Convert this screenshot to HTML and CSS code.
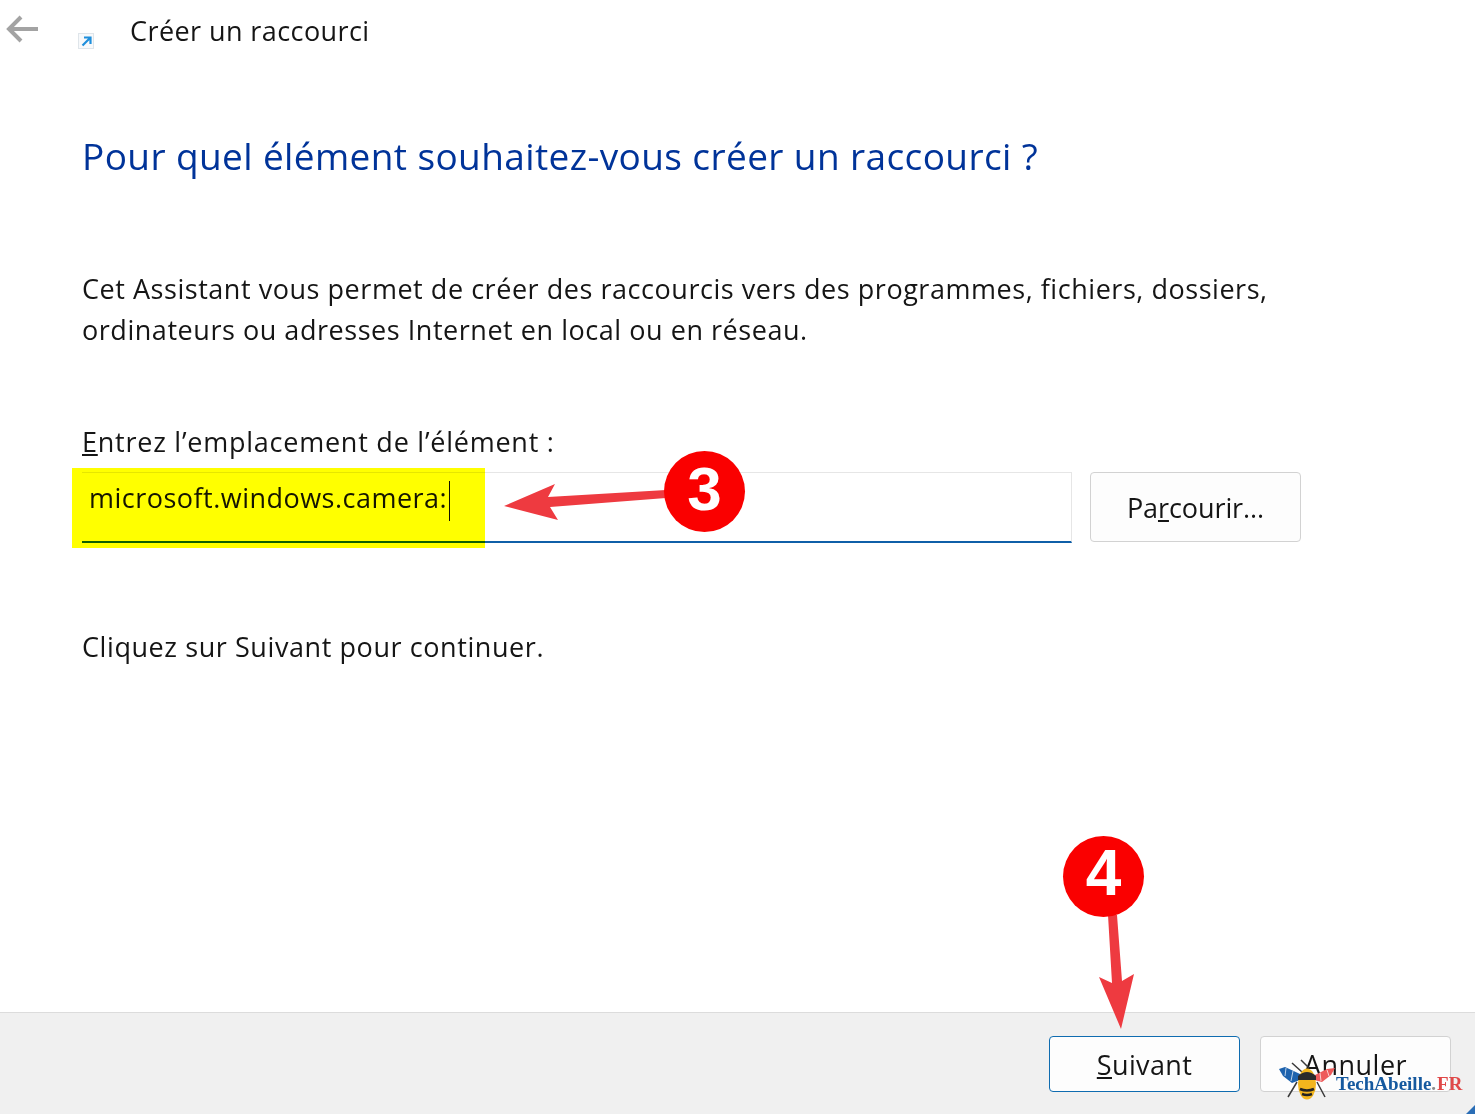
FILE: index.html
```html
<!DOCTYPE html>
<html lang="fr">
<head>
<meta charset="utf-8">
<title>Créer un raccourci</title>
<link rel="stylesheet" href="styles.css">
</head>
<body>
<div class="wizard">
  <header class="titlebar">
    <svg class="back" width="34" height="30" viewBox="0 0 34 30"><path d="M33 14H4M16 2L4 14l12 12" fill="none" stroke="#a3a3a3" stroke-width="4"/></svg>
    <svg class="shortcut" width="16" height="16" viewBox="0 0 16 16"><rect x=".5" y=".5" width="15" height="15" fill="#f7f9fb" stroke="#dfe5ea"/><path d="M4.500 12.500L12 5M6 4.500h6.500V11" fill="none" stroke="#1f8fdc" stroke-width="2.200"/></svg>
    <span class="wintitle">Créer un raccourci</span>
  </header>
  <main class="content">
    <h1 class="heading">Pour quel élément souhaitez-vous créer un raccourci ?</h1>
    <p class="intro">Cet Assistant vous permet de créer des raccourcis vers des programmes, fichiers, dossiers, ordinateurs ou adresses Internet en local ou en réseau.</p>
    <label class="label"><u>E</u>ntrez l’emplacement de l’élément :</label>
    <div class="field-row">
      <div class="input"><span class="value">microsoft.windows.camera:</span><span class="caret"></span><span class="hl"></span></div>
      <button class="btn browse">Pa<u>r</u>courir...</button>
    </div>
    <p class="hint">Cliquez sur Suivant pour continuer.</p>
  </main>
  <footer class="footer">
    <button class="btn next"><u>S</u>uivant</button>
    <button class="btn cancel">Annuler</button>
  </footer>

  <svg class="overlay" width="1475" height="1114" viewBox="0 0 1475 1114">
    <path d="M666 490L548 497L555 484L504 506L558 520L550 507L666 498Z" fill="#ee3a40"/>
    <path d="M1108 915L1117 915L1122 981L1134 974L1121 1029L1099 977L1112 983Z" fill="#ee3a40"/>
    <path d="M1292 1063l10 9M1301 1060l8 8M1297 1082l-9 15M1317 1082l8 15" stroke="#3a3a3a" stroke-width="1.500" fill="none"/>
    <path d="M1279 1069l6-2 15 7v6l-8 3-9-7z" fill="#1e63ae"/>
    <path d="M1335 1068l-8 1-12 6-1 5 8 2 9-7z" fill="#ee5a5a"/>
    <path d="M1286 1068l-1 8M1293 1071l-2 10M1327 1070l2 6M1320 1073l1 8" stroke="#fff" stroke-width=".7" fill="none"/>
    <ellipse cx="1307" cy="1084" rx="9" ry="15.500" fill="#f2b51d"/>
    <path d="M1298 1076q9-8 18 0v4h-18z" fill="#2b2b2b"/>
    <path d="M1300 1089q7 3 14 0M1302 1094q5 2 10 0" stroke="#222" stroke-width="2.500" fill="none"/>
    <path d="M1475 1105l-9 9h9z" fill="#2a6db5"/>
  </svg>

  <span class="badge badge-three">3</span>
  <span class="badge badge-four">4</span>
  <span class="brand">TechAbeille<span class="brand-dot">.</span><span class="brand-fr">FR</span></span>
</div>
</body>
</html>
```
FILE: styles.css
```css
* { box-sizing: border-box; }
html, body { margin: 0; padding: 0; }
body { background: #fff; font-family: "Open Sans", "Noto Sans", sans-serif; color: #151515; }

.wizard { position: relative; width: 1475px; height: 1114px; display: flex; flex-direction: column; overflow: hidden; }

.titlebar { height: 62px; display: flex; align-items: flex-start; flex: none; }
.back { margin: 15px 0 0 5px; }
.shortcut { margin: 33px 0 0 39px; }
.wintitle { margin: 12px 0 0 36px; font-size: 27px; line-height: 38px; letter-spacing: .42px; }

.content { flex: 1; padding: 69px 0 0 82px; display: flex; flex-direction: column; align-items: flex-start; }
.heading { margin: 0; font-size: 37px; line-height: 50px; font-weight: 400; color: #003399; letter-spacing: .39px; }
.intro { margin: 87px 0 0; width: 1210px; font-size: 27px; line-height: 41px; letter-spacing: .54px; }
.label { margin-top: 73px; font-size: 27px; line-height: 38px; letter-spacing: .76px; }

.field-row { display: flex; gap: 18px; margin-top: 11px; }
.input { position: relative; width: 990px; height: 71px; border: 1px solid #e6e6e6; border-bottom: 2px solid #0f5fa8; border-left: 0; display: flex; align-items: flex-start; padding: 6px 0 0 7px; }
.hl { position: absolute; left: -10px; top: -5px; width: 413px; height: 80px; background: #ffff00; mix-blend-mode: multiply; }
.value { font-size: 27px; line-height: 38px; letter-spacing: .48px; }
.caret { width: 1px; height: 40px; margin: 2px 0 0 2px; background: #111; }

.btn { font-family: inherit; font-size: 27px; color: #151515; background: #fdfdfd; border: 1px solid #d2d2d2; border-radius: 4px; padding: 0; }
.browse { width: 211px; height: 70px; letter-spacing: -.08px; }
.hint { margin: 85px 0 0; font-size: 27px; line-height: 38px; letter-spacing: .58px; }

.footer { flex: none; height: 102px; background: #f0f0f0; border-top: 1px solid #dcdcdc; display: flex; justify-content: flex-end; align-items: flex-start; gap: 20px; padding: 23px 24px 0 0; }
.next, .cancel { width: 191px; height: 56px; }
.next { border-color: #0f6cb0; letter-spacing: .36px; }
.cancel { letter-spacing: .5px; }

.overlay { position: absolute; left: 0; top: 0; pointer-events: none; }

.badge { position: absolute; width: 81px; height: 81px; border-radius: 50%; background: #fa0000; color: #fff; font-family: "Liberation Sans", sans-serif; font-weight: 700; line-height: 76px; text-align: center; }
.badge-three { left: 664px; top: 451px; font-size: 62px; }
.badge-four { left: 1063px; top: 836px; font-size: 64px; line-height: 75px; }

.brand { position: absolute; left: 1336px; top: 1072px; font-family: "Liberation Serif", serif; font-weight: 700; font-size: 19px; line-height: 24px; color: #15599f; white-space: nowrap; }
.brand-dot { color: #8a8a8a; margin-right: 1px; }
.brand-fr { color: #e04848; }
```
